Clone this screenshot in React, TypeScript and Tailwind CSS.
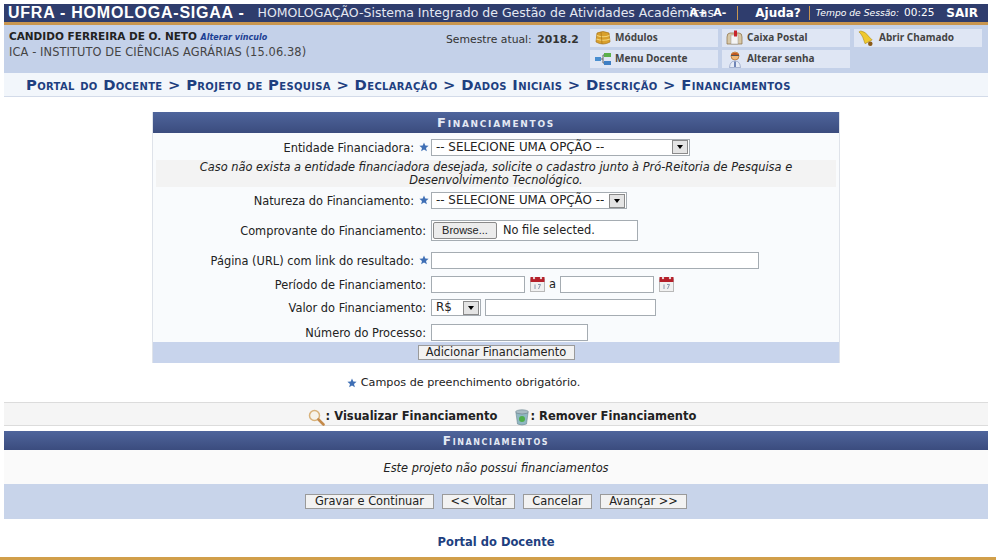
import React from 'react';

const Star = () => (
  <svg width="10" height="10" viewBox="0 0 10 10" className="shrink-0">
    <path d="M5 0.5 L6.3 3.6 L9.6 3.8 L7 6 L7.9 9.3 L5 7.5 L2.1 9.3 L3 6 L0.4 3.8 L3.7 3.6 Z" fill="#3f6fb5" />
  </svg>
);

const CalendarIcon = () => (
  <svg width="15" height="16" viewBox="0 0 15 16" className="shrink-0">
    <rect x="0.5" y="3" width="14" height="12.5" fill="#f1f1f1" stroke="#b9b9b9" />
    <rect x="0.5" y="1" width="14" height="5" fill="#b5202a" />
    <circle cx="4" cy="2" r="1.2" fill="#ead9d9" />
    <circle cx="11" cy="2" r="1.2" fill="#ead9d9" />
    <path d="M5 8.5 V13 M8 8.5 H10.5 L8.5 13" stroke="#8a9ab0" strokeWidth="1" fill="none" />
  </svg>
);

const BoxIcon = () => (
  <svg width="16" height="16" viewBox="0 0 16 16">
    <path d="M2 3 Q8 0 14 3 L15 12 Q8 16 1 12 Z" fill="#d9a02c" stroke="#a8741a" strokeWidth="0.7" />
    <path d="M2 5.5 Q8 8 14.5 5.5 M1.5 9 Q8 11.5 15 9" stroke="#f4d57a" strokeWidth="1.2" fill="none" />
    <path d="M6 1.8 L7 14" stroke="#a8741a" strokeWidth="0.7" fill="none" />
  </svg>
);

const TreeIcon = () => (
  <svg width="16" height="14" viewBox="0 0 16 14">
    <rect x="0" y="5" width="6" height="4" fill="#4a8fd0" />
    <rect x="9" y="1" width="7" height="4" fill="#5cb04a" />
    <rect x="9" y="9" width="7" height="4" fill="#3f7fc4" />
    <path d="M6 7 H8 V3 H9 M8 7 V11 H9" stroke="#666" fill="none" />
  </svg>
);

const MailIcon = () => (
  <svg width="17" height="16" viewBox="0 0 17 16">
    <path d="M1 7 Q1 3 4 3 H13 Q16 3 16 7 V14 H1 Z" fill="#d7c8a8" stroke="#8a6f44" strokeWidth="0.7" />
    <rect x="5" y="5" width="7" height="9" fill="#f5f5f5" stroke="#999" strokeWidth="0.5" />
    <rect x="8" y="0.5" width="3" height="6" fill="#c8242c" />
  </svg>
);

const PersonIcon = () => (
  <svg width="14" height="17" viewBox="0 0 14 17">
    <circle cx="7" cy="5" r="4" fill="#f0b878" stroke="#b06a28" strokeWidth="0.7" />
    <path d="M3 3.5 Q7 0 11 3.5 L11 4.5 H3 Z" fill="#c0561e" />
    <rect x="3" y="4" width="8" height="1" fill="#555" />
    <path d="M1.5 16.5 Q2 10 7 10 Q12 10 12.5 16.5 Z" fill="#e6ecf6" stroke="#8090b8" strokeWidth="0.6" />
    <path d="M7 10.5 V16" stroke="#3c5a9c" strokeWidth="1.4" />
  </svg>
);

const BellIcon = () => (
  <svg width="18" height="17" viewBox="0 0 18 17">
    <path d="M1 1.5 L3 0.5 Q8 1 12 7 L15 10 L7.5 14 Q6 10 5 7 Q3 3 1 1.5 Z" fill="#f0c92e" stroke="#a98618" strokeWidth="0.6" />
    <circle cx="13" cy="14" r="2.4" fill="#8a5a18" />
  </svg>
);

const MagnifierIcon = () => (
  <svg width="18" height="17" viewBox="0 0 18 17">
    <circle cx="6.5" cy="6.5" r="5" fill="#f6f3ea" stroke="#d8b27a" strokeWidth="1.5" />
    <path d="M10.5 10.5 L15.5 15.5" stroke="#c48a4a" strokeWidth="2.6" strokeLinecap="round" />
  </svg>
);

const TrashIcon = () => (
  <svg width="16" height="17" viewBox="0 0 15 17">
    <ellipse cx="7.5" cy="3" rx="6.5" ry="2.2" fill="#a9bcc4" stroke="#6d8490" strokeWidth="0.6" />
    <path d="M1.5 4 L3 15 Q7.5 17 12 15 L13.5 4 Q7.5 6.5 1.5 4 Z" fill="#8fb8c2" stroke="#6d8490" strokeWidth="0.6" />
    <circle cx="7.5" cy="10" r="3" fill="#4fae4a" />
  </svg>
);

const SelectBox = ({ text, className }: { text: string; className: string }) => (
  <div className={`flex items-center justify-between h-[17px] border border-[#a5acb2] bg-white pl-1 pr-px text-[11.9px] text-[#222] ${className}`}>
    <span className="pt-px whitespace-nowrap overflow-hidden">{text}</span>
    <span className="flex items-center justify-center w-[16px] h-[14px] shrink-0 border border-[#8a8a8a] bg-[#e4e4e4]">
      <span className="border-x-[3px] border-t-[4px] border-x-transparent border-t-black" />
    </span>
  </div>
);

const TextBox = ({ className }: { className: string }) => (
  <input type="text" readOnly className={`h-[17px] border border-[#a5acb2] bg-white ${className}`} />
);

const ActionButton = ({ label, className }: { label: string; className: string }) => (
  <button className={`h-[15px] flex items-center justify-center border border-[#9a9a9a] bg-[#f2f2f2] text-[11.4px] leading-none text-[#222] whitespace-nowrap ${className}`}>
    {label}
  </button>
);

const MenuItem = ({ icon, label }: { icon: React.ReactNode; label: string }) => (
  <div className="flex items-center gap-1 w-[128px] h-[18px] pl-1 bg-[#dfe6f4] font-['Noto_Sans',sans-serif] text-[10px] font-bold text-[#444]">
    <span className="w-[17px] flex justify-center shrink-0">{icon}</span>
    <span className="pb-[2px] whitespace-nowrap">{label}</span>
  </div>
);

const SectionTitle = ({ children, className }: { children: React.ReactNode; className: string }) => (
  <div className={`flex items-center justify-center bg-gradient-to-b from-[#4f659c] to-[#3b4c7e] font-bold text-[#e4e9f4] [font-variant:small-caps] ${className}`}>
    {children}
  </div>
);

const FormRow = ({
  label,
  required,
  className,
  children,
}: {
  label: string;
  required?: boolean;
  className: string;
  children: React.ReactNode;
}) => (
  <div className={`grid grid-cols-[278px_1fr] items-center ${className}`}>
    <div className={`flex items-center justify-end gap-[5px] whitespace-nowrap ${required ? 'pr-[2px]' : 'pr-[5px]'}`}>
      <span className="pt-[3px]">{label}</span>
      {required && <Star />}
    </div>
    <div className="flex items-center">{children}</div>
  </div>
);

export default function App() {
  return (
    <div className="w-[996px] h-[560px] overflow-hidden bg-white font-['DejaVu_Sans',Verdana,sans-serif] text-[11.4px] text-[#222]">
      <div className="w-[992px] pt-1 pl-1">
        <div className="w-[984px]">
          <header className="relative flex items-center h-[18px] bg-[#2f3d6d] text-white overflow-hidden">
            <span className="ml-1 font-['Liberation_Sans',Arial,sans-serif] text-[16px] font-bold tracking-[0.75px] whitespace-nowrap">
              UFRA - HOMOLOGA-SIGAA -
            </span>
            <span className="ml-[13px] text-[12.5px] text-[#e4e8f2] whitespace-nowrap">
              HOMOLOGAÇÃO-Sistema Integrado de Gestão de Atividades Acadêmicas
            </span>
            <div className="absolute inset-y-0 right-0 flex items-center whitespace-nowrap">
              <span className="text-[11px] font-bold mr-[6px]">A+</span>
              <span className="text-[11px] font-bold mr-[11px]">A-</span>
              <span className="w-px h-[14px] bg-[#c9964f] mr-[17px]" />
              <span className="text-[12px] font-bold mr-[8px]">Ajuda?</span>
              <span className="w-px h-[14px] bg-[#c9964f] mr-[6px]" />
              <span className="text-[9.2px] italic mr-[5px]">Tempo de Sessão:</span>
              <span className="text-[10.5px] mr-[12px]">00:25</span>
              <span className="text-[12px] font-bold mr-[10px]">SAIR</span>
            </div>
          </header>
          <div className="h-[3px] bg-[#c9964f]" />

          <section className="flex h-[48px] bg-[#c4d1e9]">
            <div className="w-[442px] pl-[5px] pt-1">
              <div className="leading-[15px] whitespace-nowrap">
                <b className="text-[10.5px] text-[#222]">CANDIDO FERREIRA DE O. NETO</b>{' '}
                <i className="text-[8px] font-bold text-[#1c3f94]">Alterar vínculo</i>
              </div>
              <div className="leading-[15px] text-[11.4px] tracking-[0.1px] text-[#444] whitespace-nowrap">
                ICA - INSTITUTO DE CIÊNCIAS AGRÁRIAS (15.06.38)
              </div>
            </div>
            <div className="w-[144px] pt-[7px] text-[10.8px] text-[#333] whitespace-nowrap">
              Semestre atual: <b className="ml-[2px]">2018.2</b>
            </div>
            <div className="grid grid-cols-[128px_128px_128px] gap-x-1 gap-y-[3px] pt-1 content-start">
              <MenuItem icon={<BoxIcon />} label="Módulos" />
              <MenuItem icon={<MailIcon />} label="Caixa Postal" />
              <MenuItem icon={<BellIcon />} label="Abrir Chamado" />
              <MenuItem icon={<TreeIcon />} label="Menu Docente" />
              <MenuItem icon={<PersonIcon />} label="Alterar senha" />
            </div>
          </section>

          <nav className="flex items-center h-[24px] pl-[22px] pt-[2px] border-b border-[#d3dbe9] bg-[#f2f6fb] text-[14.8px] tracking-[0.33px] font-bold text-[#1e3f80] [font-variant:small-caps] whitespace-nowrap">
            Portal do Docente &gt; Projeto de Pesquisa &gt; Declaração &gt; Dados Iniciais &gt; Descrição &gt; Financiamentos
          </nav>
        </div>

        <main className="flex flex-col items-center w-[984px] mt-[15px]">
          <div className="w-[688px] border-x border-[#dfe3ea] bg-[#f9fbfd]">
            <SectionTitle className="h-[21px] text-[13px] tracking-[1.7px]">Financiamentos</SectionTitle>
            <FormRow label="Entidade Financiadora:" required className="h-[27px] pt-1 pb-[6px]">
              <SelectBox text="-- SELECIONE UMA OPÇÃO --" className="w-[259px]" />
            </FormRow>
            <div className="mx-[3px] h-[27px] pt-px bg-[#f3f3f3] text-center italic leading-[13px]">
              Caso não exista a entidade financiadora desejada, solicite o cadastro junto à Pró-Reitoria de Pesquisa e
              <br />
              Desenvolvimento Tecnológico.
            </div>
            <FormRow label="Natureza do Financiamento:" required className="h-[27px]">
              <SelectBox text="-- SELECIONE UMA OPÇÃO --" className="w-[196px]" />
            </FormRow>
            <FormRow label="Comprovante do Financiamento:" className="h-[33px]">
              <div className="flex items-center w-[207px] h-[21px] border border-[#a5acb2] bg-white pl-px">
                <span className="flex items-center justify-center w-[64px] h-[17px] rounded-[2px] border border-[#8a8a8a] bg-[#ececec] text-[11px] font-['Liberation_Sans',Arial,sans-serif]">
                  Browse...
                </span>
                <span className="ml-[6px]">No file selected.</span>
              </div>
            </FormRow>
            <FormRow label="Página (URL) com link do resultado:" required className="h-[27px]">
              <TextBox className="w-[328px]" />
            </FormRow>
            <FormRow label="Período de Financiamento:" className="h-[19px]">
              <TextBox className="w-[94px]" />
              <span className="ml-[5px]"><CalendarIcon /></span>
              <span className="ml-1 mr-1">a</span>
              <TextBox className="w-[94px]" />
              <span className="ml-[5px]"><CalendarIcon /></span>
            </FormRow>
            <FormRow label="Valor do Financiamento:" className="h-[29px]">
              <SelectBox text="R$" className="w-[50px]" />
              <TextBox className="ml-1 w-[171px]" />
            </FormRow>
            <FormRow label="Número do Processo:" className="h-[20px] pb-[3px]">
              <TextBox className="w-[157px]" />
            </FormRow>
            <div className="flex items-center justify-center h-[21px] bg-[#c8d4ec]">
              <ActionButton label="Adicionar Financiamento" className="w-[157px]" />
            </div>
          </div>

          <div className="flex items-center gap-1 h-[16px] mt-[12px] mr-[65px] text-[11.2px]">
            <Star />
            <span className="pt-px">Campos de preenchimento obrigatório.</span>
          </div>
        </main>

        <div className="w-[984px] mt-[11px]">
          <div className="flex items-center justify-center h-[24px] pt-[6px] pl-[12px] border-y border-[#dcdcdc] bg-[#f5f5f5] text-[11.5px] font-bold text-[#222] whitespace-nowrap">
            <MagnifierIcon />
            <span className="mr-[17px]">: Visualizar Financiamento</span>
            <TrashIcon />
            <span>: Remover Financiamento</span>
          </div>
          <SectionTitle className="h-[19px] mt-[5px] text-[12px] tracking-[1.6px]">Financiamentos</SectionTitle>
          <div className="flex items-center justify-center h-[34px] pt-1 bg-[#fafafa] italic">
            Este projeto não possui financiamentos
          </div>
          <div className="flex items-center justify-center gap-2 h-[35px] bg-[#c8d4ea]">
            <ActionButton label="Gravar e Continuar" className="w-[129px]" />
            <ActionButton label="<< Voltar" className="w-[73px]" />
            <ActionButton label="Cancelar" className="w-[69px]" />
            <ActionButton label="Avançar >>" className="w-[87px]" />
          </div>
          <div className="flex items-center justify-center h-[38px] pt-[10px] text-[11.5px] font-bold text-[#1e3f80]">
            Portal do Docente
          </div>
        </div>
      </div>
      <div className="h-[3px] bg-[#d19f4a]" />
    </div>
  );
}
